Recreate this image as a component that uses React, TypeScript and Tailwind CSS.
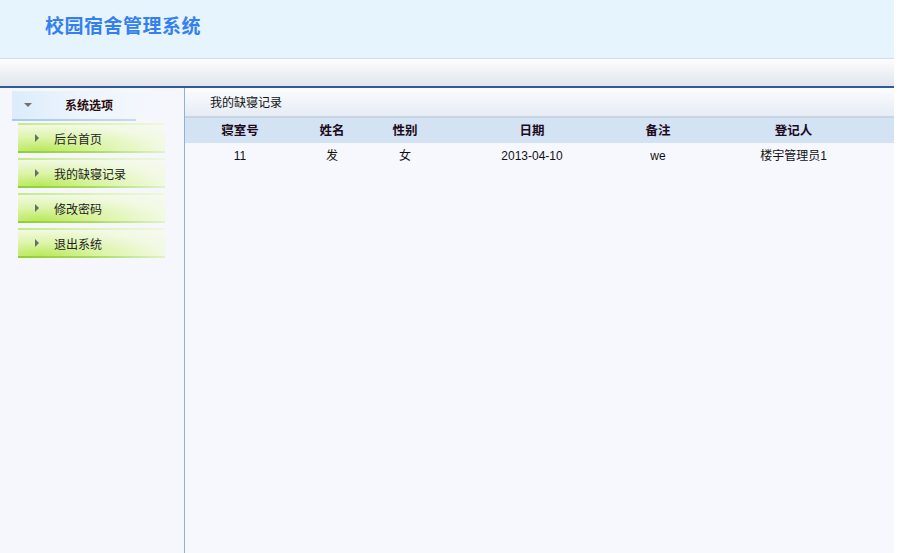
const menu = ['后台首页', '我的缺寝记录', '修改密码', '退出系统'];

const cols = [
  { title: '寝室号', w: 'w-[110px]' },
  { title: '姓名', w: 'w-[74px]' },
  { title: '性别', w: 'w-[72px]' },
  { title: '日期', w: 'w-[182px]' },
  { title: '备注', w: 'w-[70px]' },
  { title: '登记人', w: 'w-[201px]' },
];

const rows = [['11', '发', '女', '2013-04-10', 'we', '楼宇管理员1']];

export default function App() {
  return (
    <div
      className="h-[553px] w-[908px] overflow-hidden bg-white text-[12px] text-black"
      style={{ fontFamily: '"Liberation Sans", "Noto Sans CJK SC", sans-serif' }}
    >
      <div className="flex h-full w-[894px] flex-col bg-[#f7f8fe]">
        {/* top banner */}
        <div className="flex h-[59px] items-center border-b border-[#d6dbe6] bg-[#e6f4fd] pl-[45px]">
          <h1 className="pb-[4px] text-[19px] font-bold tracking-[0.5px] text-[#3580ee]">校园宿舍管理系统</h1>
        </div>
        <div className="h-[29px] border-b-2 border-[#30589a] bg-gradient-to-b from-[#fcfdfe] to-[#e1e5ec]" />

        <div className="flex flex-1">
          {/* sidebar */}
          <div className="w-[185px] border-r border-[#8db3cf] bg-[#f5f7fd] pt-[3px]">
            <div className="ml-[12px] flex h-[28px] w-[152px] items-center bg-gradient-to-r from-[#dcecfb] via-[#eef5fd] to-[#f5f7fd]">
              <span className="ml-[12px] h-0 w-0 border-x-[4px] border-t-[4px] border-x-transparent border-t-[#707070]" />
              <span className="ml-[33px] pt-[1px] font-bold text-[#2a0a0a]">系统选项</span>
            </div>
            <div className="ml-[12px] h-[2px] w-[124px] bg-gradient-to-r from-[#a7c8e8] to-[#c9d9ef]" />
            <div className="mt-[2px] flex flex-col gap-[5px]">
              {menu.map((m) => (
                <div key={m} className="ml-[18px] w-[147px]">
                  <div className="h-[2px] bg-gradient-to-r from-[#c4eb80] via-[#dcf3b4] to-[#eef8de]" />
                  <div className="flex h-[26px] items-center bg-[radial-gradient(ellipse_at_15%_100%,#b8e85a_0%,#dcf4a8_35%,#f1f9e2_70%,#f6f9f2_100%)]">
                    <span className="ml-[17px] h-0 w-0 border-y-[4px] border-l-[4px] border-y-transparent border-l-[#6b6b6b]" />
                    <span className="ml-[15px] pt-[4px] text-[#222]">{m}</span>
                  </div>
                  <div className="h-[2px] bg-gradient-to-r from-[#8fd02c] via-[#a8dc55] to-[#e2f2c6]" />
                </div>
              ))}
            </div>
          </div>

          {/* content */}
          <div className="flex-1">
            <div className="flex h-[30px] items-center border-b-2 border-[#c8d4e2] bg-gradient-to-b from-[#fbfcfe] to-[#e6ecf5] pl-[25px] pt-[2px] text-[#111]">
              我的缺寝记录
            </div>
            <table className="border-collapse">
              <thead>
                <tr className="h-[25px] bg-[#d3e3f3]">
                  {cols.map((c) => (
                    <th key={c.title} className={`${c.w} p-0 pt-[1px] text-center text-[12.5px] font-bold text-[#200a20]`}>
                      {c.title}
                    </th>
                  ))}
                </tr>
              </thead>
              <tbody>
                {rows.map((r, i) => (
                  <tr key={i} className="h-[25px]">
                    {r.map((v, j) => (
                      <td key={j} className="p-0 text-center text-[#111]">
                        {v}
                      </td>
                    ))}
                  </tr>
                ))}
              </tbody>
            </table>
          </div>
        </div>
      </div>
    </div>
  );
}
